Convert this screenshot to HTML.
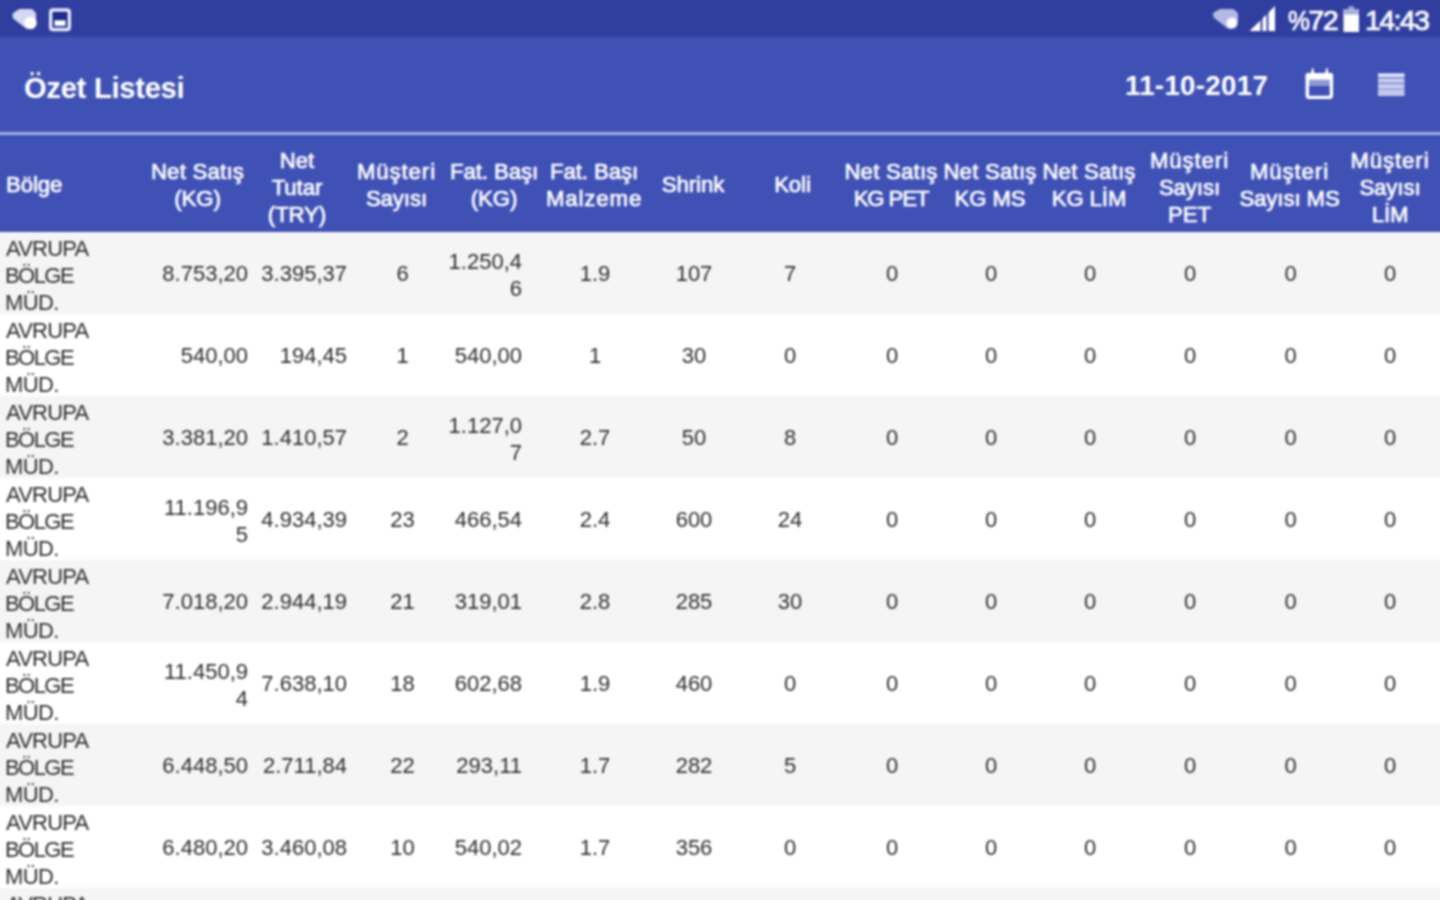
<!DOCTYPE html>
<html><head><meta charset="utf-8"><title>Özet Listesi</title>
<style>
html,body{margin:0;padding:0;width:1440px;height:900px;overflow:hidden;background:#fff;}
body{font-family:"Liberation Sans",sans-serif;position:relative;}
.sb{position:absolute;left:-10px;top:-10px;width:1460px;height:47px;background:#303f9f;}
.tb{position:absolute;left:-10px;top:37px;width:1460px;height:96px;background:#3f51b5;}
.sep{position:absolute;left:-10px;top:132px;width:1460px;height:3px;background:#a5ace5;}
.hd{position:absolute;left:-10px;top:135px;width:1460px;height:97px;background:#3f51b5;color:#fff;}
.title{position:absolute;left:24px;top:70px;font-size:29px;letter-spacing:-0.2px;font-weight:bold;color:#fff;line-height:36px;}
.date{position:absolute;left:1125px;top:69px;font-size:27.5px;letter-spacing:0.4px;font-weight:bold;color:#fff;line-height:34px;}
.row{position:absolute;left:-10px;width:1460px;height:82px;}
.c,.h{position:absolute;top:0;height:100%;box-sizing:border-box;display:flex;align-items:center;font-size:22px;}
.c{line-height:27px;color:#2e2e2e;}
.h{line-height:27px;color:#fff;-webkit-text-stroke:0.6px #fff;}
.c.r{width:110px;justify-content:flex-end;text-align:right;}
.c.m,.h.m{width:110px;justify-content:center;text-align:center;}
.c.l,.h.l{text-align:left;}
.c.l{letter-spacing:-0.8px;}
.b2{letter-spacing:-1.55px;position:relative;left:-1px;}
.b3{letter-spacing:-0.6px;position:relative;left:-1px;}
.w1{letter-spacing:1px;}
.w2{letter-spacing:0.3px;}
.sbt{position:absolute;top:3px;font-size:28.5px;color:#fff;line-height:34px;-webkit-text-stroke:0.7px #fff;}
svg{position:absolute;}
#wrap{position:absolute;left:-10px;top:-10px;width:1460px;height:920px;filter:blur(1px);}
#in{position:absolute;left:10px;top:10px;width:1440px;height:900px;}
</style></head><body>
<div id="wrap"><div id="in">
<div class="sb"></div>
<div class="tb"></div>
<div class="sep"></div>
<div class="hd"><div class="h l" style="left:16px;padding-top:2px"><div>Bölge</div></div><div class="h m" style="left:152.5px;padding-top:2px"><div><span class="w2">Net Satış</span><br>(KG)</div></div><div class="h m" style="left:252.0px;padding-top:7px"><div>Net<br>Tutar<br>(TRY)</div></div><div class="h m" style="left:351.5px;padding-top:2px"><div><span class="w1">Müşteri</span><br>Sayısı</div></div><div class="h m" style="left:449.0px;padding-top:2px"><div>Fat. Başı<br>(KG)</div></div><div class="h m" style="left:549.0px;padding-top:2px"><div>Fat. Başı<br><span class="w1">Malzeme</span></div></div><div class="h m" style="left:648.0px;padding-top:2px"><div>Shrink</div></div><div class="h m" style="left:747.5px;padding-top:2px"><div>Koli</div></div><div class="h m" style="left:846.0px;padding-top:2px"><div><span class="w2">Net Satış</span><br><span style="letter-spacing:-1px">KG PET</span></div></div><div class="h m" style="left:945.0px;padding-top:2px"><div><span class="w2">Net Satış</span><br>KG MS</div></div><div class="h m" style="left:1044.0px;padding-top:2px"><div><span class="w2">Net Satış</span><br>KG LİM</div></div><div class="h m" style="left:1144.5px;padding-top:7px"><div><span class="w1">Müşteri</span><br>Sayısı<br>PET</div></div><div class="h m" style="left:1244.5px;padding-top:2px"><div><span class="w1">Müşteri</span><br>Sayısı MS</div></div><div class="h m" style="left:1345.0px;padding-top:7px"><div><span class="w1">Müşteri</span><br>Sayısı<br>LİM</div></div></div>
<div class="row" style="top:232px;background:#f5f5f5"><div class="c l" style="left:16px;padding-top:4px"><div>AVRUPA<br><span class="b2">BÖLGE</span><br><span class="b3">MÜD.</span></div></div><div class="c r" style="left:148px;padding-top:1px"><div>8.753,20</div></div><div class="c r" style="left:247px;padding-top:1px"><div>3.395,37</div></div><div class="c m" style="left:357.5px;padding-top:1px"><div>6</div></div><div class="c r" style="left:422px;padding-top:3.5px"><div>1.250,4<br>6</div></div><div class="c m" style="left:550.0px;padding-top:1px"><div>1.9</div></div><div class="c m" style="left:649.0px;padding-top:1px"><div>107</div></div><div class="c m" style="left:745.0px;padding-top:1px"><div>7</div></div><div class="c m" style="left:847.0px;padding-top:1px"><div>0</div></div><div class="c m" style="left:946.0px;padding-top:1px"><div>0</div></div><div class="c m" style="left:1045.0px;padding-top:1px"><div>0</div></div><div class="c m" style="left:1145.0px;padding-top:1px"><div>0</div></div><div class="c m" style="left:1245.5px;padding-top:1px"><div>0</div></div><div class="c m" style="left:1345.0px;padding-top:1px"><div>0</div></div></div><div class="row" style="top:314px;background:#ffffff"><div class="c l" style="left:16px;padding-top:4px"><div>AVRUPA<br><span class="b2">BÖLGE</span><br><span class="b3">MÜD.</span></div></div><div class="c r" style="left:148px;padding-top:1px"><div>540,00</div></div><div class="c r" style="left:247px;padding-top:1px"><div>194,45</div></div><div class="c m" style="left:357.5px;padding-top:1px"><div>1</div></div><div class="c r" style="left:422px;padding-top:1px"><div>540,00</div></div><div class="c m" style="left:550.0px;padding-top:1px"><div>1</div></div><div class="c m" style="left:649.0px;padding-top:1px"><div>30</div></div><div class="c m" style="left:745.0px;padding-top:1px"><div>0</div></div><div class="c m" style="left:847.0px;padding-top:1px"><div>0</div></div><div class="c m" style="left:946.0px;padding-top:1px"><div>0</div></div><div class="c m" style="left:1045.0px;padding-top:1px"><div>0</div></div><div class="c m" style="left:1145.0px;padding-top:1px"><div>0</div></div><div class="c m" style="left:1245.5px;padding-top:1px"><div>0</div></div><div class="c m" style="left:1345.0px;padding-top:1px"><div>0</div></div></div><div class="row" style="top:396px;background:#f5f5f5"><div class="c l" style="left:16px;padding-top:4px"><div>AVRUPA<br><span class="b2">BÖLGE</span><br><span class="b3">MÜD.</span></div></div><div class="c r" style="left:148px;padding-top:1px"><div>3.381,20</div></div><div class="c r" style="left:247px;padding-top:1px"><div>1.410,57</div></div><div class="c m" style="left:357.5px;padding-top:1px"><div>2</div></div><div class="c r" style="left:422px;padding-top:3.5px"><div>1.127,0<br>7</div></div><div class="c m" style="left:550.0px;padding-top:1px"><div>2.7</div></div><div class="c m" style="left:649.0px;padding-top:1px"><div>50</div></div><div class="c m" style="left:745.0px;padding-top:1px"><div>8</div></div><div class="c m" style="left:847.0px;padding-top:1px"><div>0</div></div><div class="c m" style="left:946.0px;padding-top:1px"><div>0</div></div><div class="c m" style="left:1045.0px;padding-top:1px"><div>0</div></div><div class="c m" style="left:1145.0px;padding-top:1px"><div>0</div></div><div class="c m" style="left:1245.5px;padding-top:1px"><div>0</div></div><div class="c m" style="left:1345.0px;padding-top:1px"><div>0</div></div></div><div class="row" style="top:478px;background:#ffffff"><div class="c l" style="left:16px;padding-top:4px"><div>AVRUPA<br><span class="b2">BÖLGE</span><br><span class="b3">MÜD.</span></div></div><div class="c r" style="left:148px;padding-top:3.5px"><div>11.196,9<br>5</div></div><div class="c r" style="left:247px;padding-top:1px"><div>4.934,39</div></div><div class="c m" style="left:357.5px;padding-top:1px"><div>23</div></div><div class="c r" style="left:422px;padding-top:1px"><div>466,54</div></div><div class="c m" style="left:550.0px;padding-top:1px"><div>2.4</div></div><div class="c m" style="left:649.0px;padding-top:1px"><div>600</div></div><div class="c m" style="left:745.0px;padding-top:1px"><div>24</div></div><div class="c m" style="left:847.0px;padding-top:1px"><div>0</div></div><div class="c m" style="left:946.0px;padding-top:1px"><div>0</div></div><div class="c m" style="left:1045.0px;padding-top:1px"><div>0</div></div><div class="c m" style="left:1145.0px;padding-top:1px"><div>0</div></div><div class="c m" style="left:1245.5px;padding-top:1px"><div>0</div></div><div class="c m" style="left:1345.0px;padding-top:1px"><div>0</div></div></div><div class="row" style="top:560px;background:#f5f5f5"><div class="c l" style="left:16px;padding-top:4px"><div>AVRUPA<br><span class="b2">BÖLGE</span><br><span class="b3">MÜD.</span></div></div><div class="c r" style="left:148px;padding-top:1px"><div>7.018,20</div></div><div class="c r" style="left:247px;padding-top:1px"><div>2.944,19</div></div><div class="c m" style="left:357.5px;padding-top:1px"><div>21</div></div><div class="c r" style="left:422px;padding-top:1px"><div>319,01</div></div><div class="c m" style="left:550.0px;padding-top:1px"><div>2.8</div></div><div class="c m" style="left:649.0px;padding-top:1px"><div>285</div></div><div class="c m" style="left:745.0px;padding-top:1px"><div>30</div></div><div class="c m" style="left:847.0px;padding-top:1px"><div>0</div></div><div class="c m" style="left:946.0px;padding-top:1px"><div>0</div></div><div class="c m" style="left:1045.0px;padding-top:1px"><div>0</div></div><div class="c m" style="left:1145.0px;padding-top:1px"><div>0</div></div><div class="c m" style="left:1245.5px;padding-top:1px"><div>0</div></div><div class="c m" style="left:1345.0px;padding-top:1px"><div>0</div></div></div><div class="row" style="top:642px;background:#ffffff"><div class="c l" style="left:16px;padding-top:4px"><div>AVRUPA<br><span class="b2">BÖLGE</span><br><span class="b3">MÜD.</span></div></div><div class="c r" style="left:148px;padding-top:3.5px"><div>11.450,9<br>4</div></div><div class="c r" style="left:247px;padding-top:1px"><div>7.638,10</div></div><div class="c m" style="left:357.5px;padding-top:1px"><div>18</div></div><div class="c r" style="left:422px;padding-top:1px"><div>602,68</div></div><div class="c m" style="left:550.0px;padding-top:1px"><div>1.9</div></div><div class="c m" style="left:649.0px;padding-top:1px"><div>460</div></div><div class="c m" style="left:745.0px;padding-top:1px"><div>0</div></div><div class="c m" style="left:847.0px;padding-top:1px"><div>0</div></div><div class="c m" style="left:946.0px;padding-top:1px"><div>0</div></div><div class="c m" style="left:1045.0px;padding-top:1px"><div>0</div></div><div class="c m" style="left:1145.0px;padding-top:1px"><div>0</div></div><div class="c m" style="left:1245.5px;padding-top:1px"><div>0</div></div><div class="c m" style="left:1345.0px;padding-top:1px"><div>0</div></div></div><div class="row" style="top:724px;background:#f5f5f5"><div class="c l" style="left:16px;padding-top:4px"><div>AVRUPA<br><span class="b2">BÖLGE</span><br><span class="b3">MÜD.</span></div></div><div class="c r" style="left:148px;padding-top:1px"><div>6.448,50</div></div><div class="c r" style="left:247px;padding-top:1px"><div>2.711,84</div></div><div class="c m" style="left:357.5px;padding-top:1px"><div>22</div></div><div class="c r" style="left:422px;padding-top:1px"><div>293,11</div></div><div class="c m" style="left:550.0px;padding-top:1px"><div>1.7</div></div><div class="c m" style="left:649.0px;padding-top:1px"><div>282</div></div><div class="c m" style="left:745.0px;padding-top:1px"><div>5</div></div><div class="c m" style="left:847.0px;padding-top:1px"><div>0</div></div><div class="c m" style="left:946.0px;padding-top:1px"><div>0</div></div><div class="c m" style="left:1045.0px;padding-top:1px"><div>0</div></div><div class="c m" style="left:1145.0px;padding-top:1px"><div>0</div></div><div class="c m" style="left:1245.5px;padding-top:1px"><div>0</div></div><div class="c m" style="left:1345.0px;padding-top:1px"><div>0</div></div></div><div class="row" style="top:806px;background:#ffffff"><div class="c l" style="left:16px;padding-top:4px"><div>AVRUPA<br><span class="b2">BÖLGE</span><br><span class="b3">MÜD.</span></div></div><div class="c r" style="left:148px;padding-top:1px"><div>6.480,20</div></div><div class="c r" style="left:247px;padding-top:1px"><div>3.460,08</div></div><div class="c m" style="left:357.5px;padding-top:1px"><div>10</div></div><div class="c r" style="left:422px;padding-top:1px"><div>540,02</div></div><div class="c m" style="left:550.0px;padding-top:1px"><div>1.7</div></div><div class="c m" style="left:649.0px;padding-top:1px"><div>356</div></div><div class="c m" style="left:745.0px;padding-top:1px"><div>0</div></div><div class="c m" style="left:847.0px;padding-top:1px"><div>0</div></div><div class="c m" style="left:946.0px;padding-top:1px"><div>0</div></div><div class="c m" style="left:1045.0px;padding-top:1px"><div>0</div></div><div class="c m" style="left:1145.0px;padding-top:1px"><div>0</div></div><div class="c m" style="left:1245.5px;padding-top:1px"><div>0</div></div><div class="c m" style="left:1345.0px;padding-top:1px"><div>0</div></div></div><div class="row" style="top:888px;background:#f5f5f5"><div class="c l" style="left:16px;padding-top:4px"><div>AVRUPA<br><span class="b2">BÖLGE</span><br><span class="b3">MÜD.</span></div></div></div>
<div class="title">Özet Listesi</div>
<div class="date">11-10-2017</div>
<svg style="left:1290px;top:60px" width="130" height="45" viewBox="1290 60 130 45">
  <rect x="1307.3" y="74.6" width="24.1" height="22.8" rx="2.2" fill="none" stroke="#fff" stroke-width="3.4"/>
  <rect x="1305.6" y="72.9" width="27.5" height="6.8" rx="2" fill="#fff"/>
  <rect x="1309" y="79.5" width="20.6" height="6.5" fill="#fff" fill-opacity="0.42"/>
  <path fill="#fff" d="M1311 73 L1312 68 L1313.2 68 L1314.2 73 Z M1325.2 73 L1326.2 68 L1327.4 68 L1328.4 73 Z"/>
  <rect x="1378" y="73.3" width="26.5" height="3.9" fill="#e2e4f9"/>
  <rect x="1378" y="77.2" width="26.5" height="1.8" fill="#8a94cc"/>
  <rect x="1378" y="79" width="26.5" height="3.5" fill="#d0d4f2"/>
  <rect x="1378" y="82.5" width="26.5" height="1.9" fill="#a0a6dc"/>
  <rect x="1378" y="84.4" width="26.5" height="3.8" fill="#cfd3f3"/>
  <rect x="1378" y="88.2" width="26.5" height="1.8" fill="#a6acdc"/>
  <rect x="1378" y="90" width="26.5" height="6" fill="#c4c8ec"/>
</svg>
<svg style="left:0;top:0" width="1440" height="37" viewBox="0 0 1440 37">
  <path fill="#d4d8f2" stroke="#d4d8f2" stroke-width="2" stroke-linejoin="round" d="M13.5 14 L19.5 10 L31.5 10 L35 13.5 L35 21 L29 28 L26.5 27.5 L14 18 Z"/>
  <circle cx="30.5" cy="23" r="6.2" fill="#fff"/>
  <rect x="51" y="10.5" width="18" height="18.5" fill="#1e2a8c"/>
  <rect x="50.7" y="10" width="18.6" height="19.5" rx="2.2" fill="none" stroke="#e6e9f8" stroke-width="3.4"/>
  <rect x="54.5" y="20.3" width="11" height="5.6" fill="#fff"/>
  <path fill="#b4b9e3" stroke="#b4b9e3" stroke-width="2" stroke-linejoin="round" d="M1214 13.5 L1220 10 L1233 10 L1237 13.5 L1237 20 L1231 28 L1228 27.5 L1214.5 17 Z"/>
  <circle cx="1232" cy="23" r="5.6" fill="#fff" fill-opacity="0.95"/>
  <path fill="#fff" d="M1249.5 31 L1260.5 31 L1260.5 20.5 Z M1262.5 31 L1266.5 31 L1266.5 14.5 L1262.5 18.5 Z M1268.5 31 L1275 31 L1275 6 L1268.5 12.5 Z"/>
  <rect x="1348.5" y="6.3" width="5.5" height="3.5" fill="#fff" fill-opacity="0.55"/>
  <rect x="1343.5" y="9.5" width="15.5" height="22.5" fill="#fff"/>
  <rect x="1343.5" y="9.5" width="15.5" height="5" fill="#aab0e0"/>
</svg>
<div class="sbt" style="left:1288px;letter-spacing:-1.5px"><span style="display:inline-block;transform:scaleX(0.86);transform-origin:left center;margin-right:-3.5px">%</span>72</div>
<div class="sbt" style="left:1365px;letter-spacing:-1.6px">14:43</div>
</div></div>
</body></html>
